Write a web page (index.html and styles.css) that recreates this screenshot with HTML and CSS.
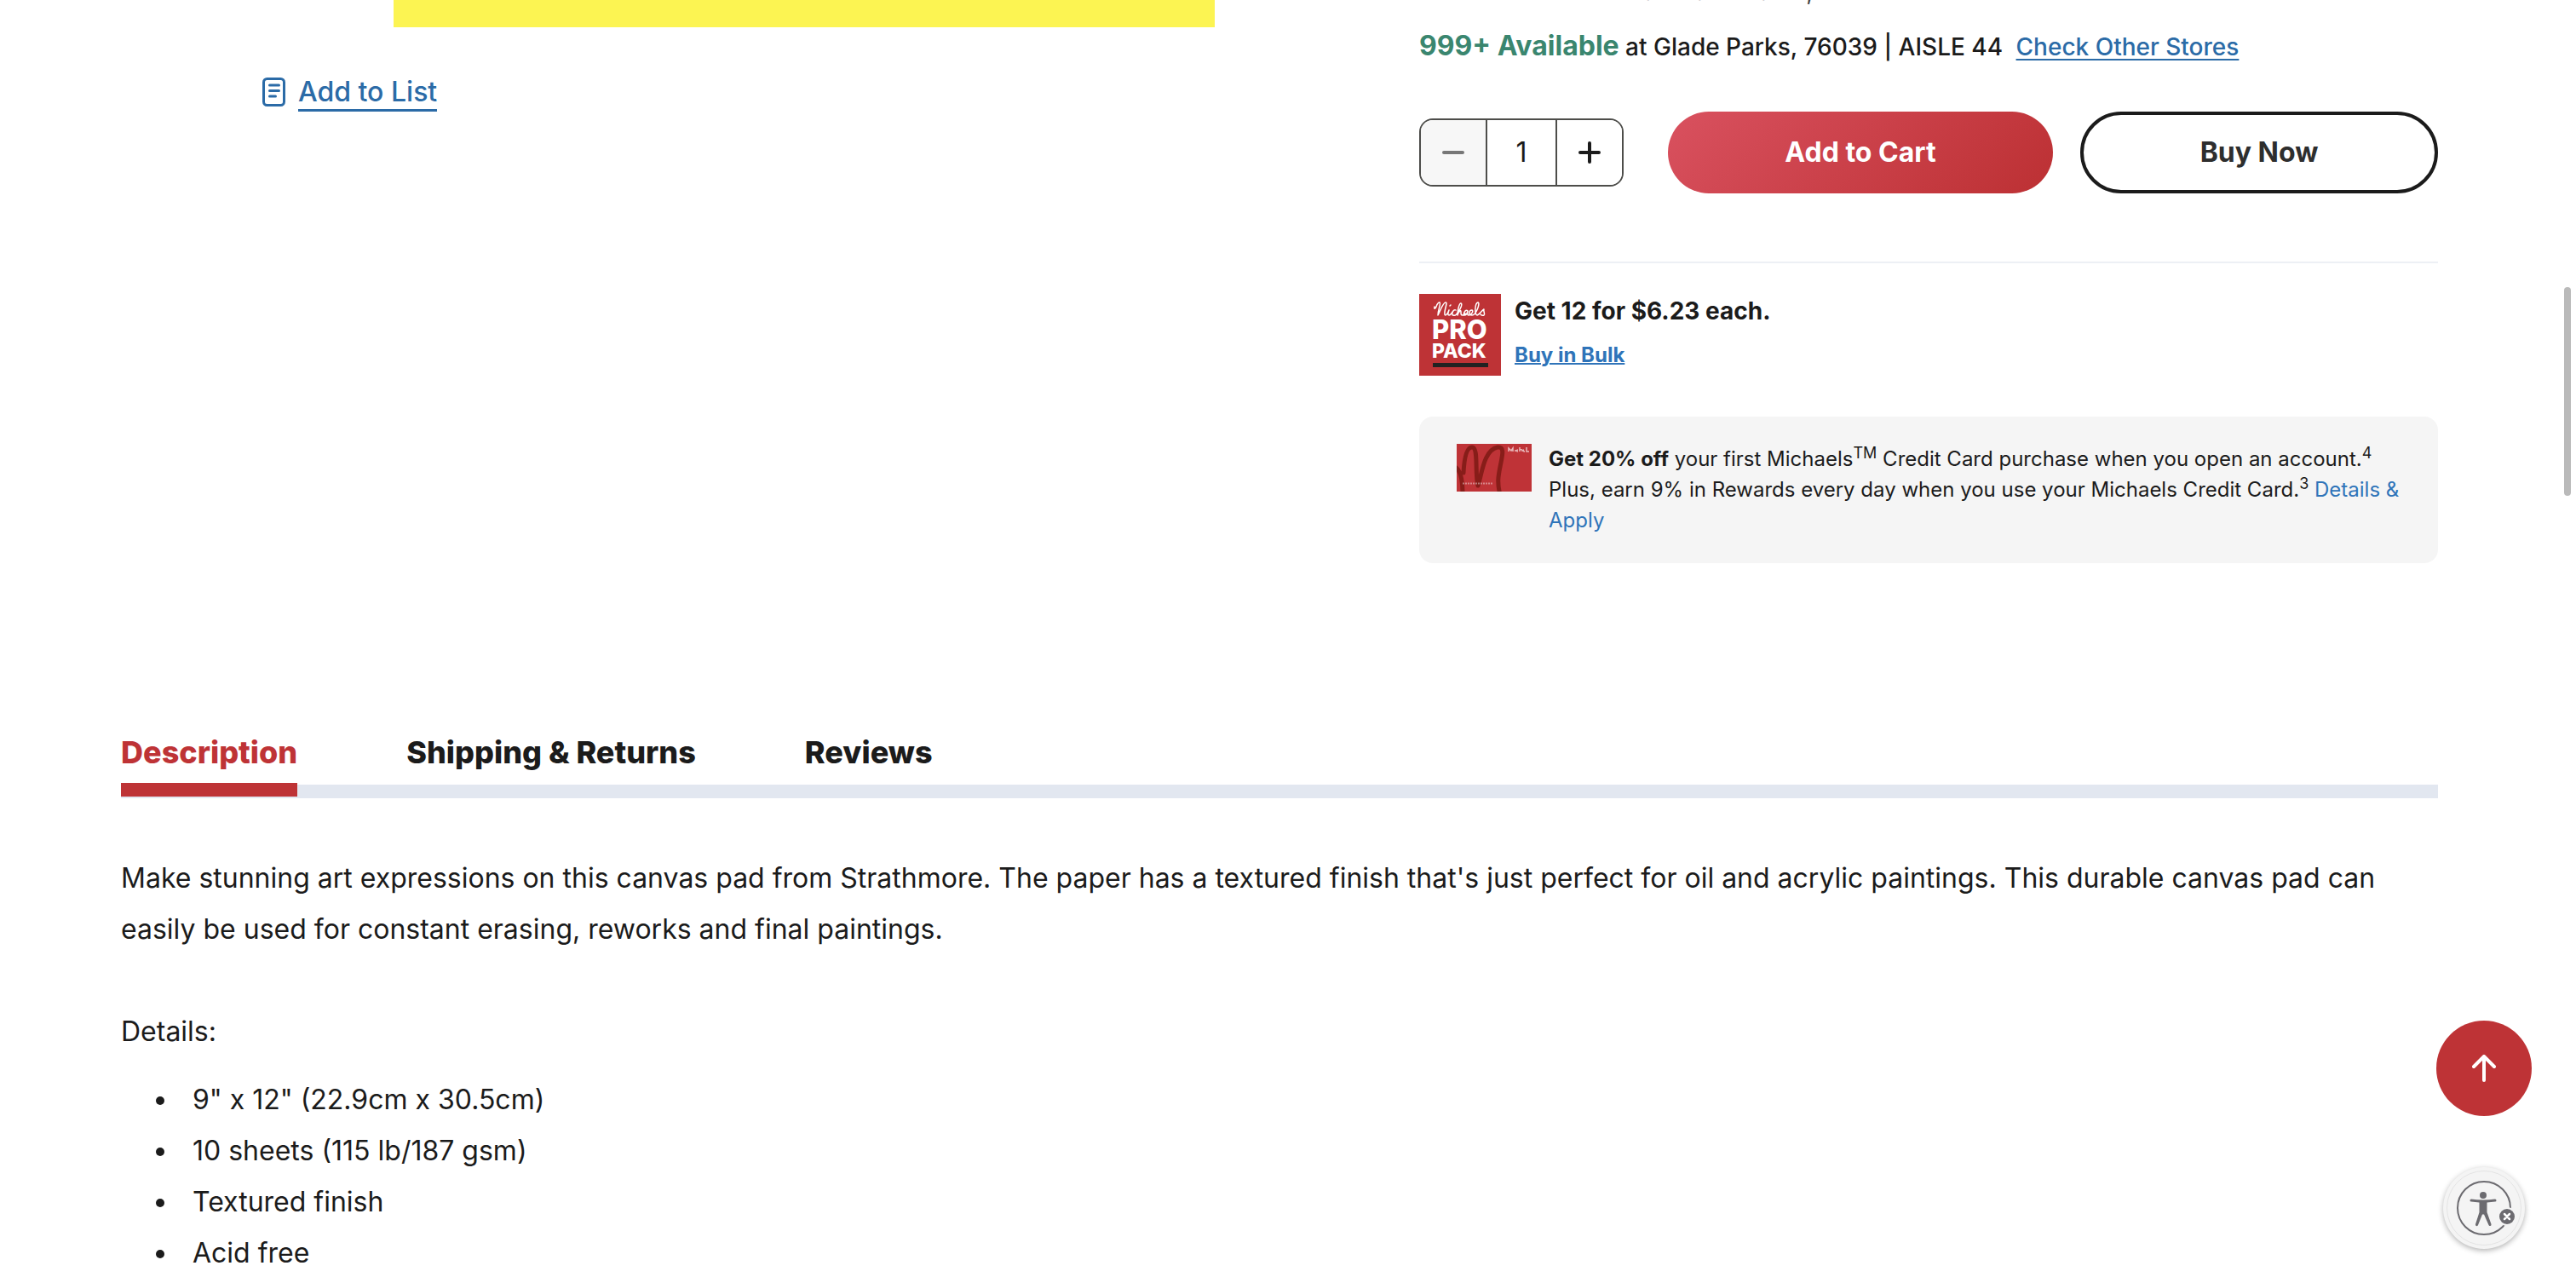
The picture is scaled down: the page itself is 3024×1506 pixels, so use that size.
FILE: index.html
```html
<!DOCTYPE html>
<html lang="en">
<head>
<meta charset="utf-8">
<meta name="viewport" content="width=device-width, initial-scale=1">
<title>Strathmore Canvas Pad | Michaels</title>
<link rel="stylesheet" href="styles.css">
</head>
<body>
<main class="page">
  <section class="product">
    <div class="gallery">
      <div class="gallery-image" role="img" aria-label="Canvas pad cover"></div>
      <a class="list-link" href="#list">
        <svg class="list-icon" viewBox="0 0 28 34" aria-hidden="true" fill="none" stroke="currentColor" stroke-width="3" stroke-linecap="round">
          <rect x="1.5" y="1.5" width="24" height="31" rx="4"/>
          <path d="M8.5 9h11M8.5 15.500h11M8.500 22h7"/>
        </svg>
        <span class="list-text">Add to List</span>
      </a>
    </div>

    <div class="purchase">
      <p class="store-line">Order in store soon at Glade Parks, 76039</p>
      <p class="stock-line"><strong class="stock-count">999+ Available</strong> at Glade Parks, 76039 | AISLE 44 <a class="stores-link" href="#stores">Check Other Stores</a></p>

      <div class="actions">
        <div class="stepper">
          <button class="step step-minus" type="button" aria-label="Decrease quantity">
            <svg class="step-icon" viewBox="0 0 28 28" aria-hidden="true" stroke="currentColor" stroke-width="4" stroke-linecap="round"><path d="M3 14h22"/></svg>
          </button>
          <input class="quantity" type="text" value="1" inputmode="numeric" aria-label="Quantity">
          <button class="step step-plus" type="button" aria-label="Increase quantity">
            <svg class="step-icon" viewBox="0 0 28 28" aria-hidden="true" stroke="currentColor" stroke-width="4" stroke-linecap="round"><path d="M3 14h22M14 3v22"/></svg>
          </button>
        </div>
        <div class="buttons">
          <button class="button button-cart" type="button">Add to Cart</button>
          <button class="button button-buy" type="button">Buy Now</button>
        </div>
      </div>

      <div class="bulk">
        <svg class="pro-pack" viewBox="0 0 96 96" role="img" aria-label="Michaels Pro Pack">
          <rect width="96" height="96" fill="#be3336"/>
          <g fill="none" stroke="#fff" stroke-width="1.5" stroke-linecap="round" stroke-linejoin="round">
            <path d="M18 15c-1 3 1 3 2 0 1-3 3-5 4-5 2 1-2 8-2 15 3-6 6-15 9-15 3 0-2 9-1 14 0 2 3 1 5-5-2 5-1 6 0 6 2 0 3-2 4-4M36 14l1-1M43 19c-3-2-6 6-3 6 2 1 4-1 5-3 4-4 6-11 4-11-2 0-4 8-4 14 1-4 4-7 4-4s0 4 2 4 2-1 3-2M57 20c-3-3-6 5-4 5 3 0 4-5 4-5s-1 5 1 5c4 0 6-6 4-6-4 0-4 6 0 6 5 0 10-15 7-15-4 1-4 15-1 15 3-1 6-6 8-7-1 3 2 6 0 7-2 1-4-1-4-1"/>
          </g>
          <text class="pack-word" x="15" y="53" font-size="31">PRO</text>
          <text class="pack-word" x="15" y="75" font-size="23">PACK</text>
          <rect x="16" y="81" width="65" height="5" fill="#222"/>
        </svg>
        <div class="bulk-text">
          <p class="bulk-title">Get 12 for $6.23 each.</p>
          <a class="bulk-link" href="#bulk">Buy in Bulk</a>
        </div>
      </div>

      <div class="credit">
        <svg class="credit-card" viewBox="0 0 88 56" aria-hidden="true">
          <rect width="88" height="56" fill="#bf3337"/>
          <g fill="none" stroke="#871d19" stroke-width="5" stroke-linecap="round" stroke-linejoin="round">
            <path d="M-2 27c6 3 9 15 9 32M8 34C9 15 12 4 18 4c8 0 3 30 7 45 4-9 6-42 23-45 8-1 6 8 4 18-3 15-5 22-1 38"/>
          </g>
          <path d="M61 9v-4l3 3 2-3v4m3-2v2m3-2c-2 0-2 2 0 2m2-5v5m0-2c3-1 3 0 3 2m2-2c-1 0-1 2 1 2m2-5v5h3" fill="none" stroke="#fff" stroke-opacity=".65" stroke-width="1.500"/>
          <path d="M7 46.500h35" stroke="#fff" stroke-opacity=".4" stroke-width="2" stroke-dasharray="2 1"/>
        </svg>
        <p class="credit-text"><strong>Get 20% off</strong> your first Michaels<sup>TM</sup> Credit Card purchase when you open an account.<sup>4</sup> Plus, earn 9% in Rewards every day when you use your Michaels Credit Card.<sup>3</sup> <a class="credit-link" href="#credit">Details &amp; Apply</a></p>
      </div>
    </div>
  </section>

  <section class="details">
    <nav class="tabs" aria-label="Product information">
      <a class="tab tab-active" href="#description" aria-current="true">Description</a>
      <a class="tab" href="#shipping">Shipping &amp; Returns</a>
      <a class="tab" href="#reviews">Reviews</a>
    </nav>
    <div class="description" id="description">
      <p class="copy">Make stunning art expressions on this canvas pad from Strathmore. The paper has a textured finish that's just perfect for oil and acrylic paintings. This durable canvas pad can easily be used for constant erasing, reworks and final paintings.</p>
      <p class="copy">Details:</p>
      <ul class="features">
        <li class="feature">9" x 12" (22.9cm x 30.5cm)</li>
        <li class="feature">10 sheets (115 lb/187 gsm)</li>
        <li class="feature">Textured finish</li>
        <li class="feature">Acid free</li>
      </ul>
    </div>
  </section>
</main>

<div class="floating">
  <button class="to-top" type="button" aria-label="Back to top">
    <svg class="to-top-icon" viewBox="0 0 28 32" aria-hidden="true" fill="none" stroke="#fff" stroke-width="4" stroke-linecap="round" stroke-linejoin="round"><path d="M14 30V2M2 14 14 2l12 12"/></svg>
  </button>
  <button class="access" type="button" aria-label="Accessibility options">
    <svg class="access-icon" viewBox="0 0 96 96" aria-hidden="true">
      <circle cx="48" cy="48" r="43.500" fill="none" stroke="#e4e4e4"/>
      <circle cx="48" cy="48" r="31" fill="none" stroke="#6c6b70" stroke-width="2"/>
      <circle cx="47" cy="33" r="4" fill="#6c6b70"/>
      <path d="M33 37.500q14 2 28 0a1.500 1.500 0 0 1 0 3L51.500 41.500V53l5 14a1.500 1.500 0 0 1-3 1L48 55.500h-2L41 68a1.500 1.500 0 0 1-3-1l4.500-14V41.500L33 40.500a1.500 1.500 0 0 1 0-3z" fill="#6c6b70"/>
      <circle cx="75" cy="58" r="11" fill="#f4f4f4"/>
      <circle cx="75" cy="58" r="9" fill="#6c6b70"/>
      <path d="m72 55 6 6m0-6-6 6" stroke="#fff" stroke-width="2.500" stroke-linecap="round"/>
    </svg>
  </button>
</div>
<div class="scroll-thumb"></div>
</body>
</html>
```

FILE: styles.css
```css
* {
  box-sizing: border-box;
}

body {
  margin: 0;
  min-height: 100vh;
  overflow: hidden;
  background: #fff;
  color: #1b1b1b;
  font-family: Inter, "Liberation Sans", sans-serif;
  font-size: 28px;
  line-height: 40px;
}

p {
  margin: 0;
}

button,
input {
  font: inherit;
  color: inherit;
}

.page {
  padding: 0 162px 0 142px;
}

.product {
  display: grid;
  grid-template-columns: 381fr 299fr;
}

/* Gallery */
.gallery-image {
  height: 32px;
  margin: 0 240px 0 320px;
  background: #fcf452;
}

.list-link {
  display: inline-flex;
  gap: 14px;
  margin: 56px 0 0 166px;
  color: #2b6ba7;
  font-size: 32px;
  font-weight: 500;
  text-decoration: none;
}

.list-icon {
  width: 28px;
  height: 34px;
  margin-top: 3px;
}

.list-text {
  border-bottom: 3px solid currentColor;
  line-height: 40px;
}

/* Purchase column */
.store-line {
  margin-top: -30px;
  color: #444;
}

.stock-line {
  margin-top: 22px;
  font-weight: 500;
  line-height: 44px;
}

.stock-count {
  color: #3a866f;
  font-size: 32px;
  font-weight: 700;
}

.stores-link {
  margin-left: 8px;
  color: #2b6ba7;
  text-decoration-thickness: 2px;
  text-underline-offset: 4px;
}

.actions {
  display: flex;
  align-items: center;
  gap: 52px;
  margin-top: 54px;
}

.stepper {
  display: flex;
  width: 240px;
  height: 80px;
  overflow: hidden;
  border: 2px solid #4d4d4a;
  border-radius: 16px;
}

.step {
  display: grid;
  flex: 1;
  place-items: center;
  padding: 0;
  border: 0;
  background: #fff;
}

.step-minus {
  background: #f7f7f7;
  color: #777;
}

.step-icon {
  width: 28px;
  height: 28px;
}

.quantity {
  width: 84px;
  padding: 0;
  border: 2px solid #4d4d4a;
  border-width: 0 2px;
  font-size: 32px;
  text-align: center;
}

.buttons {
  display: grid;
  flex: 1;
  grid-template-columns: 113fr 105fr;
  gap: 32px;
}

.button {
  height: 96px;
  padding: 0;
  border: 0;
  border-radius: 48px;
  font-size: 32px;
  font-weight: 700;
}

.button-cart {
  background: linear-gradient(135deg, #d9515f, #bc3033);
  color: #fff;
}

.button-buy {
  border: 4px solid #1b1b1b;
  background: #fff;
  color: #2e2e2e;
}

.bulk {
  display: flex;
  gap: 16px;
  margin-top: 80px;
  padding-top: 36px;
  border-top: 2px solid #edf0f5;
}

.pro-pack {
  width: 96px;
  height: 96px;
}

.pack-word {
  fill: #fff;
  font-weight: 800;
}

.bulk-title {
  font-weight: 700;
}

.bulk-link {
  display: block;
  margin-top: 12px;
  color: #2f74b9;
  font-size: 24px;
  font-weight: 700;
  text-decoration-thickness: 2px;
}

.credit {
  display: flex;
  gap: 20px;
  margin-top: 48px;
  padding: 32px 44px;
  border-radius: 16px;
  background: #f5f5f5;
}

.credit-card {
  flex: none;
  width: 88px;
  height: 56px;
}

.credit-text {
  font-size: 24px;
  line-height: 36px;
}

.credit-text sup {
  font-size: 18px;
  line-height: 0;
}

.credit-link {
  color: #2f74b9;
  text-decoration: none;
}

/* Product information */
.details {
  margin-top: 196px;
}

.tabs {
  display: flex;
  gap: 128px;
  height: 80px;
  background: linear-gradient(#e2e7f0, #e2e7f0) bottom / 100% 16px no-repeat;
}

.tab {
  height: 78px;
  color: #1b1b1b;
  font-size: 36px;
  font-weight: 800;
  line-height: 52px;
  text-decoration: none;
}

.tab-active {
  border-bottom: 16px solid #be3336;
  color: #be3336;
}

.description {
  padding-top: 64px;
  font-size: 32px;
  line-height: 60px;
}

.copy + .copy {
  margin-top: 60px;
}

.features {
  margin: 20px 0 0;
  padding-left: 68px;
}

.feature {
  padding-left: 16px;
}

/* Controls over the page */
.floating {
  position: fixed;
  right: 52px;
  bottom: 40px;
  display: flex;
  flex-direction: column;
  align-items: center;
  gap: 60px;
}

.to-top,
.access {
  display: grid;
  place-items: center;
  padding: 0;
  border: 0;
  border-radius: 50%;
}

.to-top {
  width: 112px;
  height: 112px;
  background: #be3336;
}

.to-top-icon {
  width: 28px;
  height: 32px;
}

.access {
  width: 96px;
  height: 96px;
  background: #f4f4f4;
  box-shadow: 0 2px 6px rgba(0, 0, 0, 0.3);
}

.access-icon {
  width: 96px;
  height: 96px;
}

.scroll-thumb {
  position: fixed;
  top: 337px;
  right: 6px;
  width: 8px;
  height: 245px;
  border-radius: 4px;
  background: #bababa;
}
```
